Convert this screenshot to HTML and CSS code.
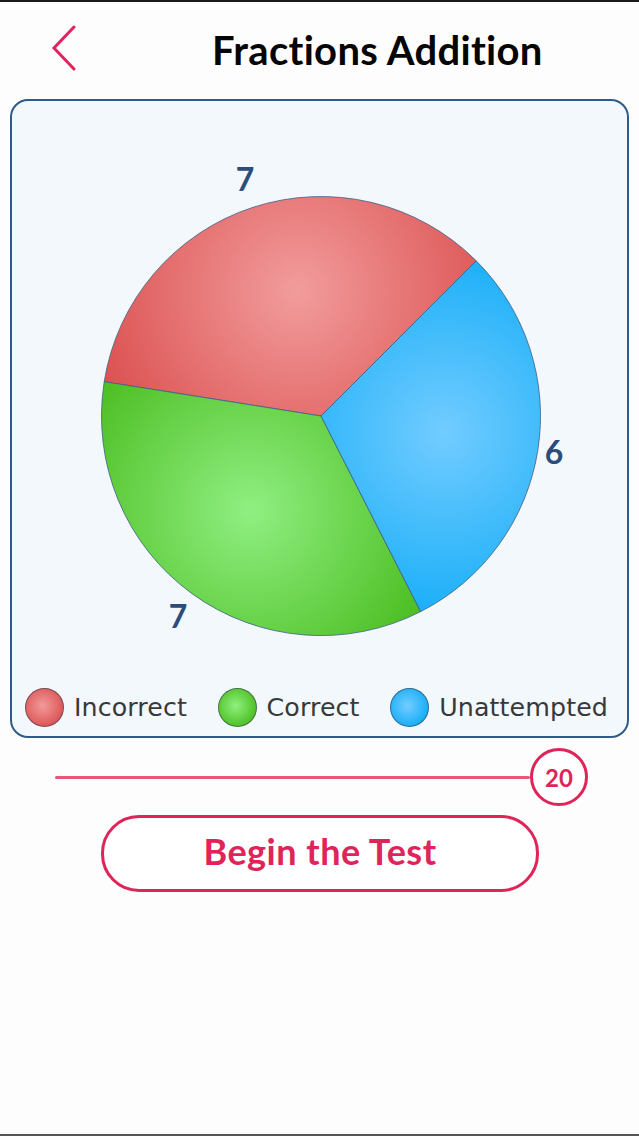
FILE: index.html
```html
<!DOCTYPE html>
<html>
<head>
<meta charset="utf-8">
<link rel="stylesheet" href="styles.css">
</head>
<body>
<div class="screen">
  <header class="header">
    <svg class="back" width="26" height="46" viewBox="0 0 26 46">
      <polyline points="23,2 3,23 23,44" fill="none" stroke="#e0245e" stroke-width="3" stroke-linecap="round" stroke-linejoin="miter"/>
    </svg>
    <h1 class="title">Fractions Addition</h1>
  </header>

  <section class="card">
    <svg class="pie" width="615" height="578" viewBox="0 0 615 578">
      <defs>
        <radialGradient id="gRed" gradientUnits="userSpaceOnUse" cx="285" cy="190" r="210">
          <stop offset="0" stop-color="#f29c9c"/>
          <stop offset="1" stop-color="#dc5252"/>
        </radialGradient>
        <radialGradient id="gGreen" gradientUnits="userSpaceOnUse" cx="238" cy="410" r="200">
          <stop offset="0" stop-color="#90ef82"/>
          <stop offset="1" stop-color="#4bbd20"/>
        </radialGradient>
        <radialGradient id="gBlue" gradientUnits="userSpaceOnUse" cx="432" cy="332" r="200">
          <stop offset="0" stop-color="#72ccff"/>
          <stop offset="1" stop-color="#12acf7"/>
        </radialGradient>
      </defs>
      <g stroke="#3d5f86" stroke-width="0.8" stroke-linejoin="round">
        <path d="M309,315 L464.2,159.8 A219.5,219.5 0 0 0 92.2,280.7 Z" fill="url(#gRed)"/>
        <path d="M309,315 L92.2,280.7 A219.5,219.5 0 0 0 408.7,510.6 Z" fill="url(#gGreen)"/>
        <path d="M309,315 L408.7,510.6 A219.5,219.5 0 0 0 464.2,159.8 Z" fill="url(#gBlue)"/>
      </g>
      <g class="pie-label">
        <text x="233" y="90" text-anchor="middle">7</text>
        <text x="542" y="363" text-anchor="middle">6</text>
        <text x="166" y="527" text-anchor="middle">7</text>
      </g>
    </svg>
    <div class="legend">
      <div class="legend-item"><span class="dot dot-red"></span><span class="legend-text">Incorrect</span></div>
      <div class="legend-item"><span class="dot dot-green"></span><span class="legend-text">Correct</span></div>
      <div class="legend-item"><span class="dot dot-blue"></span><span class="legend-text">Unattempted</span></div>
    </div>
  </section>

  <div class="slider">
    <div class="track"></div>
    <div class="thumb">20</div>
  </div>

  <div class="actions">
    <button class="begin">Begin the Test</button>
  </div>

  <div class="spacer"></div>
  <div class="bottomline"></div>
</div>
</body>
</html>
```

FILE: styles.css
```css
html, body {
  margin: 0;
  padding: 0;
  background: #fdfdfd;
}
.screen {
  width: 639px;
  height: 1136px;
  display: flex;
  flex-direction: column;
  border-top: 2px solid #1a1a1a;
  box-sizing: border-box;
  font-family: "Lato", "Open Sans", sans-serif;
}
.header {
  height: 97px;
  display: flex;
  align-items: center;
  padding-left: 51px;
  box-sizing: border-box;
}
.back {
  display: block;
  margin-top: -5px;
}
.title {
  margin: -2px 0 0 135px;
  font-family: "Lato", sans-serif;
  font-weight: 700;
  font-size: 40px;
  line-height: 1;
  color: #050505;
  letter-spacing: 0.3px;
}
.card {
  margin: 0 10px;
  height: 639px;
  border: 2px solid #2f5b8a;
  border-radius: 18px;
  background: #f3f8fd;
  box-sizing: border-box;
  display: flex;
  flex-direction: column;
  overflow: hidden;
}
.pie {
  display: block;
  flex: none;
}
.pie-label text {
  font-family: "Lato", sans-serif;
  font-weight: 700;
  font-size: 32px;
  fill: #2c4c7b;
}
.legend {
  height: 56px;
  display: flex;
  align-items: center;
  justify-content: space-between;
  padding: 0 19px 0 13px;
}
.legend-item {
  display: flex;
  align-items: center;
  gap: 10px;
}
.dot {
  width: 39px;
  height: 39px;
  border-radius: 50%;
  box-sizing: border-box;
  border: 1px solid rgba(60, 60, 80, 0.6);
}
.dot-red { background: radial-gradient(circle at 45% 45%, #f29a9a 0%, #dc5454 75%); }
.dot-green { background: radial-gradient(circle at 45% 45%, #8ff07e 0%, #4cbf22 75%); }
.dot-blue { background: radial-gradient(circle at 45% 45%, #74cdff 0%, #14adf7 75%); }
.legend-text {
  font-family: "DejaVu Sans", sans-serif;
  font-size: 25.3px;
  font-weight: 400;
  color: #383838;
  letter-spacing: 0.1px;
}
.slider {
  margin-top: 10px;
  height: 58px;
  display: flex;
  align-items: center;
  padding: 0 51px 0 55px;
}
.track {
  flex: 1;
  height: 3px;
  background: #e4587a;
  border-radius: 2px;
}
.thumb {
  width: 58px;
  height: 58px;
  box-sizing: border-box;
  border: 3px solid #df2459;
  border-radius: 50%;
  background: #fff;
  display: flex;
  align-items: center;
  justify-content: center;
  font-family: "Lato", sans-serif;
  font-weight: 700;
  font-size: 24px;
  color: #df2459;
}
.actions {
  margin-top: 9px;
  display: flex;
  justify-content: center;
}
.begin {
  width: 438px;
  height: 77px;
  box-sizing: border-box;
  border: 3px solid #df2459;
  border-radius: 38px;
  background: #fff;
  font-family: "Lato", sans-serif;
  font-weight: 700;
  font-size: 36px;
  letter-spacing: 0.5px;
  color: #df2459;
  padding: 0 0 5px 0;
  margin-left: 1px;
}
.spacer {
  flex: 1;
}
.bottomline {
  height: 2px;
  background: #555;
}
```
